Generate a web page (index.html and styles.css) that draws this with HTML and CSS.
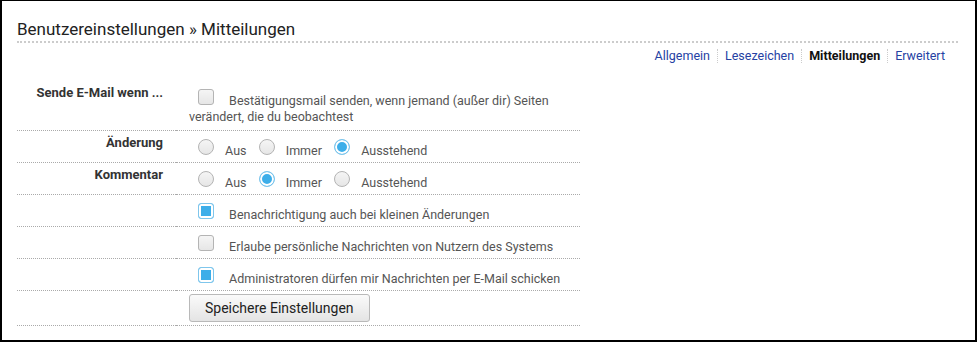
FILE: index.html
```html
<!DOCTYPE html>
<html lang="de">
<head>
    <meta charset="UTF-8">
    <title>Benutzereinstellungen - Mitteilungen</title>
    <link rel="stylesheet" href="styles.css">
</head>
<body>
    <div class="page">
        <h1>Benutzereinstellungen » Mitteilungen</h1>

        <ul class="tabs">
            <li><a href="#">Allgemein</a></li>
            <li><a href="#">Lesezeichen</a></li>
            <li class="active">Mitteilungen</li>
            <li><a href="#">Erweitert</a></li>
        </ul>

        <form class="settings-form">
            <table class="settings">
                <tr>
                    <td class="label">Sende E-Mail wenn ...</td>
                    <td class="value"><label><input type="checkbox"> Bestätigungsmail senden, wenn jemand (außer dir) Seiten verändert, die du beobachtest</label></td>
                </tr>
                <tr>
                    <td class="label">Änderung</td>
                    <td class="value">
                        <label><input type="radio" name="change"> Aus</label>
                        <label><input type="radio" name="change"> Immer</label>
                        <label><input type="radio" name="change" checked> Ausstehend</label>
                    </td>
                </tr>
                <tr>
                    <td class="label">Kommentar</td>
                    <td class="value">
                        <label><input type="radio" name="comment"> Aus</label>
                        <label><input type="radio" name="comment" checked> Immer</label>
                        <label><input type="radio" name="comment"> Ausstehend</label>
                    </td>
                </tr>
                <tr>
                    <td class="label"></td>
                    <td class="value"><label><input type="checkbox" checked> Benachrichtigung auch bei kleinen Änderungen</label></td>
                </tr>
                <tr>
                    <td class="label"></td>
                    <td class="value"><label><input type="checkbox"> Erlaube persönliche Nachrichten von Nutzern des Systems</label></td>
                </tr>
                <tr>
                    <td class="label"></td>
                    <td class="value"><label><input type="checkbox" checked> Administratoren dürfen mir Nachrichten per E-Mail schicken</label></td>
                </tr>
                <tr class="actions">
                    <td class="label"></td>
                    <td class="value"><button type="submit" class="btn">Speichere Einstellungen</button></td>
                </tr>
            </table>
        </form>
    </div>
</body>
</html>
```

FILE: styles.css
```css
* { margin: 0; padding: 0; box-sizing: border-box; }
body {
    font-family: Roboto, "Liberation Sans", sans-serif;
    background: #fff; color: #333;
}
.page {
    width: 977px; height: 342px;
    border: 1px solid #000; border-left-width: 2px; border-right-width: 2px; border-bottom-width: 2px;
    padding: 18px 17px 0 15px;
}
.page h1 {
    font-size: 17px; font-weight: 400; line-height: 20px; color: #222;
    padding-bottom: 2px; border-bottom: 2px dotted #ccc;
}

.tabs {
    list-style: none; display: flex; justify-content: flex-end;
    margin: 6px 6px 0 0;
}
.tabs li {
    font-size: 12.5px; line-height: 14px; padding: 0 7px;
    border-left: 1px dotted #ccc;
}
.tabs li:first-child { border-left: none; }
.tabs li a { color: #2541a3; text-decoration: none; }
.tabs li.active { font-weight: 700; color: #111; }

.settings-form { margin-top: 18px; }
.settings { border-collapse: collapse; width: 563px; }
.settings tr { border-bottom: 1px dotted #aaa; }
.settings td {
    vertical-align: top; padding: 4px 13px 3px;
    font-size: 12.5px; line-height: 16px;
}
.settings td.label {
    width: 159px; text-align: right; font-weight: 700; font-size: 13px; color: #333;
}
.settings td.value { padding-left: 13px; color: #555; }
.settings tr:first-child td { padding-bottom: 5px; }
.settings tr.actions td { padding-top: 3px; padding-bottom: 3px; }

.settings input[type="checkbox"],
.settings input[type="radio"] {
    -webkit-appearance: none; appearance: none;
    width: 16px; height: 16px; margin: 4px 8px 0 9px;
    border: 1px solid #b4b4b4; background: linear-gradient(#f5f5f5, #e6e6e6);
    display: inline-block; vertical-align: baseline;
}
.settings input[type="checkbox"] { border-radius: 3px; margin-right: 12px; }
.settings input[type="radio"] { border-radius: 50%; }
.settings input[type="checkbox"]:checked {
    border-color: #7fc6ec; background: #3daee9; box-shadow: inset 0 0 0 2px #fff;
}
.settings input[type="radio"]:checked {
    border-color: #7fc6ec; background: #3daee9; box-shadow: inset 0 0 0 2px #fff;
}

.btn {
    height: 28px; padding: 0 15px;
    font-family: Roboto, "Liberation Sans", sans-serif; font-size: 14px; color: #222;
    border: 1px solid #b9b9b9; border-radius: 3px;
    background: linear-gradient(#fafafa, #e4e4e4);
    cursor: pointer;
}
```
